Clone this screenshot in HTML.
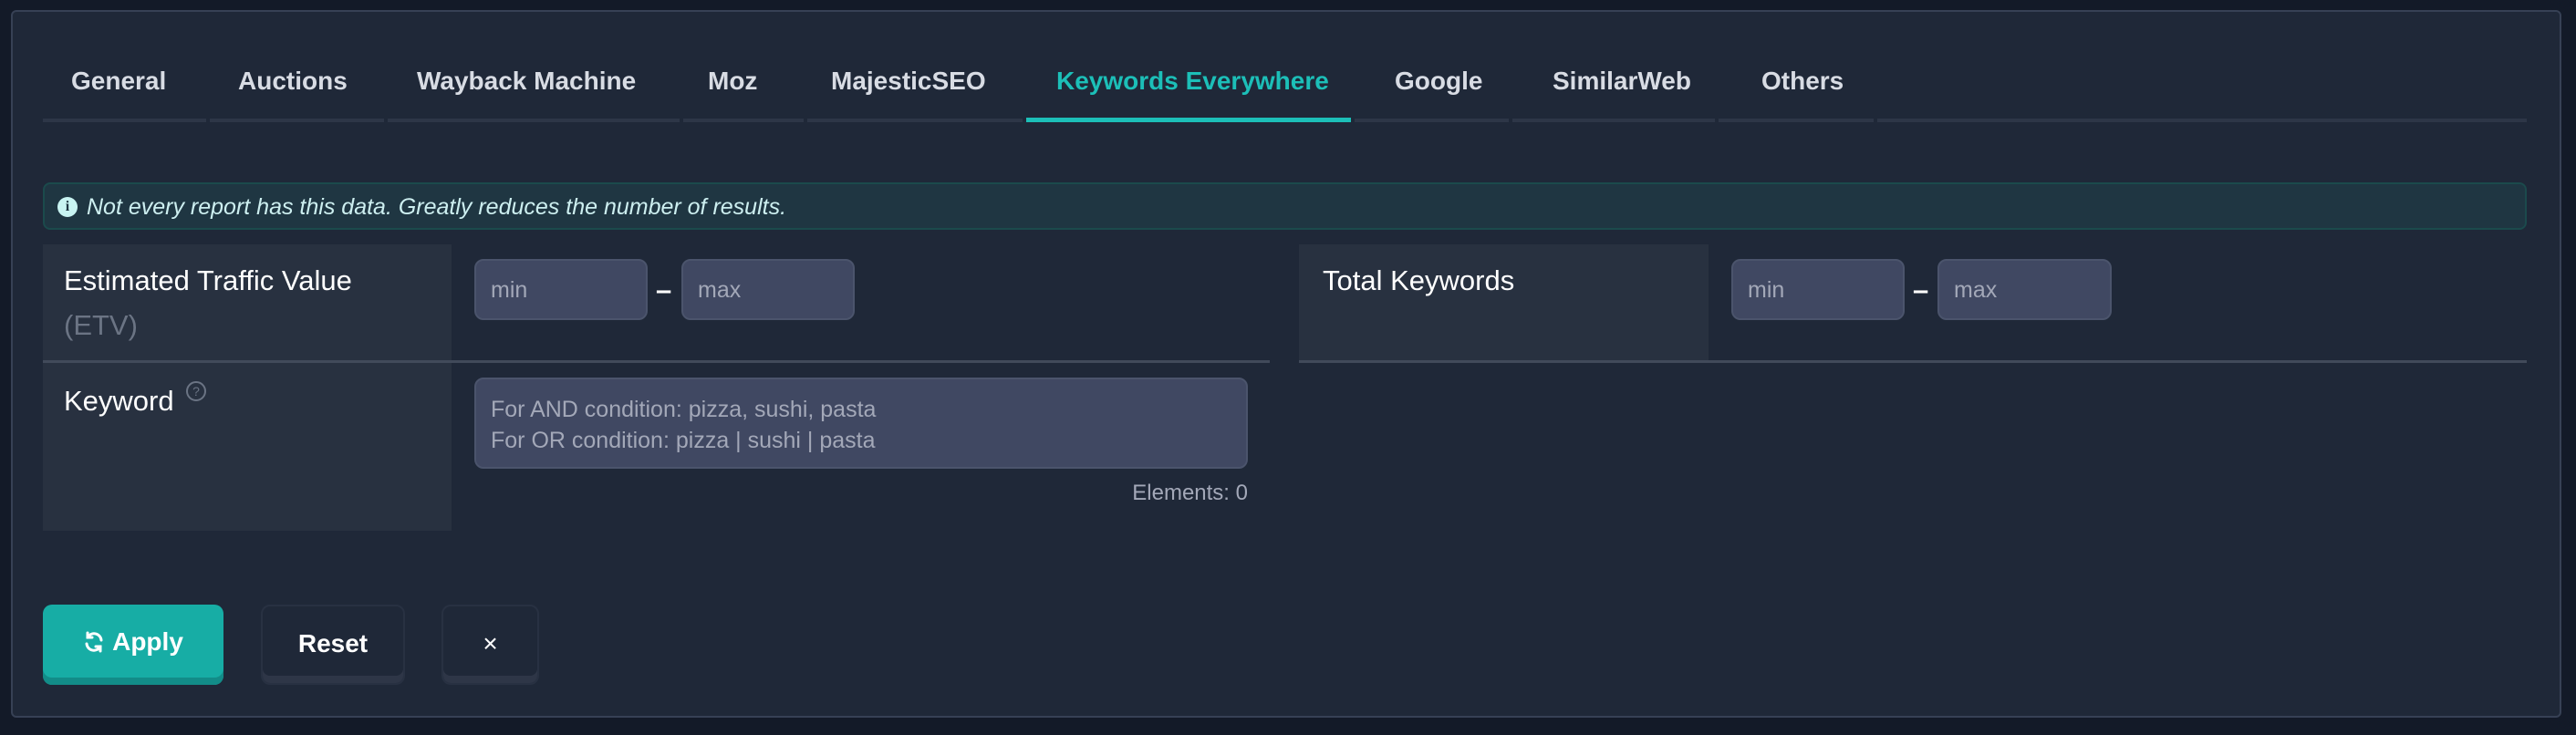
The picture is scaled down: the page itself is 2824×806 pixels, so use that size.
<!DOCTYPE html>
<html><head><meta charset="utf-8"><style>
*{box-sizing:border-box;margin:0;padding:0}
body{width:2824px;height:806px;background:#131a28;font-family:"Liberation Sans",sans-serif;position:relative;overflow:hidden}
.panel{position:absolute;left:12px;top:11px;width:2796px;height:776px;background:#1f2838;border:2px solid #374155;border-radius:6px}
.a{position:absolute}
.tab{position:absolute;top:62px;height:72px;line-height:54px;font-size:28px;font-weight:bold;color:#d8dce4;border-bottom:4px solid #2d3647;padding-left:31px;white-space:nowrap}
.tab.act{color:#1cbfb8;border-bottom:5px solid #1cbfb8}
.cell{position:absolute;background:#283140}
.lbl{position:absolute;font-size:31px;color:#fff}
.inp{position:absolute;background:#404862;border:2px solid #4b546c;border-radius:10px;color:#a3a8b8;font-size:25px;padding-left:16px;line-height:65px}
.sep{position:absolute;height:3px;background:#414a5a}
.btn{position:absolute;top:663px;height:88px;border-radius:10px;font-size:28px;font-weight:bold;color:#fff;text-align:center;line-height:82px}
</style></head><body>
<div class="panel"></div>
<div class="tab" style="left:47px;width:179px">General</div>
<div class="tab" style="left:230px;width:191px">Auctions</div>
<div class="tab" style="left:425px;width:320px;padding-left:32px">Wayback Machine</div>
<div class="tab" style="left:749px;width:132px;padding-left:27px">Moz</div>
<div class="tab" style="left:885px;width:236px;padding-left:26px">MajesticSEO</div>
<div class="tab act" style="left:1125px;width:356px;padding-left:33px">Keywords Everywhere</div>
<div class="tab" style="left:1485px;width:169px;padding-left:44px">Google</div>
<div class="tab" style="left:1658px;width:222px;padding-left:44px">SimilarWeb</div>
<div class="tab" style="left:1884px;width:170px;padding-left:47px">Others</div>
<div class="a" style="left:2058px;top:130px;width:712px;height:4px;background:#2d3647"></div>

<div class="a" style="left:47px;top:200px;width:2723px;height:52px;background:#1f3642;border:2px solid #1b4a4c;border-radius:8px"></div>
<div class="a" style="left:63px;top:216px;width:22px;height:22px;border-radius:50%;background:#c8f4f2;color:#1f3642;font-size:16px;font-weight:bold;text-align:center;line-height:22px;font-family:'Liberation Serif',serif">i</div>
<div class="a" style="left:95px;top:213px;font-size:25px;font-style:italic;color:#cdeff0">Not every report has this data. Greatly reduces the number of results.</div>

<div class="cell" style="left:47px;top:268px;width:448px;height:128px"></div>
<div class="lbl" style="left:70px;top:290px">Estimated Traffic Value</div>
<div class="lbl" style="left:70px;top:339px;color:#6b7484">(ETV)</div>
<div class="inp" style="left:520px;top:284px;width:190px;height:67px">min</div>
<div class="a" style="left:719px;top:300px;color:#fff;font-size:31px;font-weight:bold">–</div>
<div class="inp" style="left:747px;top:284px;width:190px;height:67px">max</div>
<div class="sep" style="left:47px;top:395px;width:1345px"></div>

<div class="cell" style="left:1424px;top:268px;width:449px;height:128px"></div>
<div class="lbl" style="left:1450px;top:290px">Total Keywords</div>
<div class="inp" style="left:1898px;top:284px;width:190px;height:67px">min</div>
<div class="a" style="left:2097px;top:300px;color:#fff;font-size:31px;font-weight:bold">–</div>
<div class="inp" style="left:2124px;top:284px;width:191px;height:67px">max</div>
<div class="sep" style="left:1424px;top:395px;width:1346px"></div>

<div class="cell" style="left:47px;top:398px;width:448px;height:184px"></div>
<div class="lbl" style="left:70px;top:422px">Keyword</div>
<div class="a" style="left:204px;top:418px;width:22px;height:22px;border:2px solid #6b7484;border-radius:50%;color:#6b7484;font-size:14px;text-align:center;line-height:18px">?</div>
<div class="a" style="left:520px;top:414px;width:848px;height:100px;background:#404862;border:2px solid #4b546c;border-radius:10px;color:#a3a8b8;font-size:25px;padding:16px 16px;line-height:34px">For AND condition: pizza, sushi, pasta<br>For OR condition: pizza | sushi | pasta</div>
<div class="a" style="left:1100px;top:527px;width:268px;text-align:right;font-size:24px;color:#a3a8b8">Elements: 0</div>

<div class="btn" style="left:47px;width:198px;background:#17ada5;box-shadow:inset 0 -8px 0 #128c88">
<svg width="24" height="24" viewBox="0 0 24 24" style="vertical-align:-3px;margin-right:8px" fill="none" stroke="#fff" stroke-width="3" stroke-linecap="round"><path d="M20 10A8 8 0 0 0 5 7M4 14a8 8 0 0 0 15 3"/><path d="M5 2v5h5M19 22v-5h-5"/></svg>Apply</div>
<div class="btn" style="left:286px;width:158px;border:2px solid #283142;box-shadow:inset 0 -8px 0 #2e3647">Reset</div>
<div class="btn" style="left:484px;width:107px;border:2px solid #283142;box-shadow:inset 0 -8px 0 #2e3647;font-weight:normal">×</div>
</body></html>
